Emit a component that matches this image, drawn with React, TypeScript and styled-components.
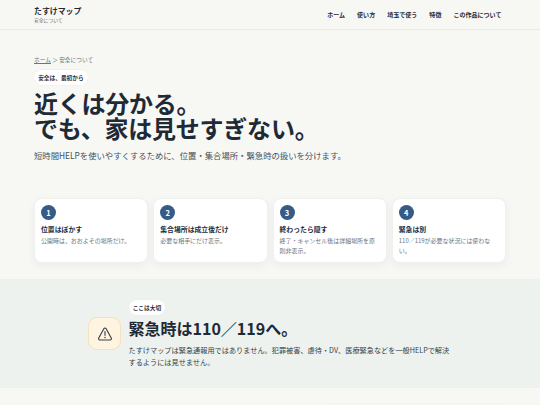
import styled, { createGlobalStyle } from 'styled-components';

const GlobalStyle = createGlobalStyle`
  * { box-sizing: border-box; }
  body {
    margin: 0;
    background: #f7f8f4;
    color: #1f2a37;
    font-family: 'Noto Sans CJK JP', 'Noto Sans', sans-serif;
  }
  h1, h2, h3, p { margin: 0; }
`;

const Page = styled.div`
  height: 405px;
  overflow: hidden;
`;

const Header = styled.header`
  display: flex;
  justify-content: space-between;
  align-items: center;
  height: 30px;
  padding: 0 38.5px 0 34px;
  border-bottom: 1px solid #e9ebe8;
`;

const Brand = styled.div`
  display: flex;
  flex-direction: column;
`;

const BrandName = styled.strong`
  font-size: 7.9px;
  line-height: 11px;
`;

const BrandSub = styled.span`
  font-size: 4.8px;
  line-height: 8px;
  color: #5f6b76;
`;

const Nav = styled.nav`
  display: flex;
  gap: 12px;
`;

const NavLink = styled.a`
  font-size: 6.04px;
  line-height: 10px;
  font-weight: 700;
`;

const Hero = styled.section`
  padding: 24px 34px 0;
`;

const Breadcrumb = styled.div`
  font-size: 5.7px;
  line-height: 11px;
  color: #6b7580;
`;

const Crumb = styled.a`
  text-decoration: underline;
`;

const Pill = styled.span`
  display: block;
  width: fit-content;
  height: 15px;
  padding: 0 4.2px;
  border-radius: 8px;
  background: #fff;
  box-shadow: 0 0 0 0.4px #e9ecea;
  font-size: 5.7px;
  line-height: 15px;
  font-weight: 700;
`;

const HeroPill = styled(Pill)`
  margin-top: 5px;
`;

const Title = styled.h1`
  margin-top: 5px;
  font-size: 24px;
  line-height: 25.2px;
  font-weight: 700;
  letter-spacing: -0.24px;
`;

const Lead = styled.p`
  margin-top: 7.6px;
  font-size: 8.35px;
  line-height: 15px;
  color: #46515d;
`;

const Cards = styled.section`
  display: grid;
  grid-template-columns: repeat(4, 1fr);
  gap: 5px;
  padding: 35px 34px 0;
`;

const Card = styled.article`
  height: 65px;
  padding: 6px;
  border: 1px solid #eff1ee;
  border-radius: 8px;
  background: #fff;
  box-shadow: 0 3px 8px rgba(31, 42, 55, 0.05);
`;

const StepNumber = styled.span`
  display: flex;
  align-items: center;
  justify-content: center;
  width: 15px;
  height: 15px;
  border-radius: 50%;
  background: #365b87;
  color: #fff;
  font-size: 7.5px;
  font-weight: 700;
`;

const CardTitle = styled.h3`
  margin-top: 4px;
  font-size: 6.85px;
  line-height: 10px;
  font-weight: 700;
`;

const CardText = styled.p`
  margin-top: 2px;
  font-size: 5.97px;
  line-height: 9.7px;
  color: #6b7580;
`;

const Emergency = styled.section`
  display: flex;
  gap: 7.5px;
  align-items: center;
  height: 109px;
  margin-top: 16px;
  padding: 0 88px;
  background: #edf2ee;
`;

const IconBox = styled.div`
  display: flex;
  align-items: center;
  justify-content: center;
  flex: none;
  width: 33px;
  height: 33px;
  border: 1px solid #f0e2c2;
  border-radius: 9px;
  background: #fff4df;
`;

const EmergencyTitle = styled.h2`
  margin-top: 3px;
  font-size: 16px;
  line-height: 20px;
  font-weight: 700;
`;

const EmergencyText = styled.p`
  margin-top: 6px;
  font-size: 7.18px;
  line-height: 12px;
  color: #35414c;
  white-space: nowrap;
`;

const NextSection = styled.section`
  display: flex;
  justify-content: flex-end;
  padding: 15px 34px 0;
`;

const NextPanel = styled.div`
  width: 184px;
  height: 60px;
  border-radius: 8px;
  background: #f5f5ee;
`;

const navItems = ['ホーム', '使い方', '埼玉で使う', '特徴', 'この作品について'];

const steps = [
  { title: '位置はぼかす', text: '公開時は、おおよその場所だけ。' },
  { title: '集合場所は成立後だけ', text: '必要な相手にだけ表示。' },
  { title: '終わったら隠す', text: '終了・キャンセル後は詳細場所を原則非表示。' },
  { title: '緊急は別', text: '110／119が必要な状況には使わない。' },
];

const WarningIcon = () => (
  <svg width="16" height="16" viewBox="0 0 24 24" fill="none" stroke="#3a4045" strokeWidth="1.7" strokeLinecap="round" strokeLinejoin="round">
    <path d="M10.3 4 2.6 18a2 2 0 0 0 1.7 3h15.4a2 2 0 0 0 1.7-3l-7.7-14a2 2 0 0 0-3.4 0Z" />
    <path d="M12 8.5v5.5" />
    <path d="M12 17.3v.1" strokeWidth="2.2" />
  </svg>
);

export default function App() {
  return (
    <Page>
      <GlobalStyle />
      <Header>
        <Brand>
          <BrandName>たすけマップ</BrandName>
          <BrandSub>安全について</BrandSub>
        </Brand>
        <Nav>
          {navItems.map(item => <NavLink key={item}>{item}</NavLink>)}
        </Nav>
      </Header>

      <main>
        <Hero>
          <Breadcrumb><Crumb>ホーム</Crumb> ＞ 安全について</Breadcrumb>
          <HeroPill>安全は、最初から</HeroPill>
          <Title>近くは分かる。<br />でも、家は見せすぎない。</Title>
          <Lead>短時間HELPを使いやすくするために、位置・集合場所・緊急時の扱いを分けます。</Lead>
        </Hero>

        <Cards>
          {steps.map((step, i) => (
            <Card key={step.title}>
              <StepNumber>{i + 1}</StepNumber>
              <CardTitle>{step.title}</CardTitle>
              <CardText>{step.text}</CardText>
            </Card>
          ))}
        </Cards>

        <Emergency>
          <IconBox><WarningIcon /></IconBox>
          <div>
            <Pill>ここは大切</Pill>
            <EmergencyTitle>緊急時は110／119へ。</EmergencyTitle>
            <EmergencyText>
              たすけマップは緊急通報用ではありません。犯罪被害、虐待・DV、医療緊急などを一般HELPで解決<br />
              するようには見せません。
            </EmergencyText>
          </div>
        </Emergency>

        <NextSection>
          <NextPanel />
        </NextSection>
      </main>
    </Page>
  );
}
